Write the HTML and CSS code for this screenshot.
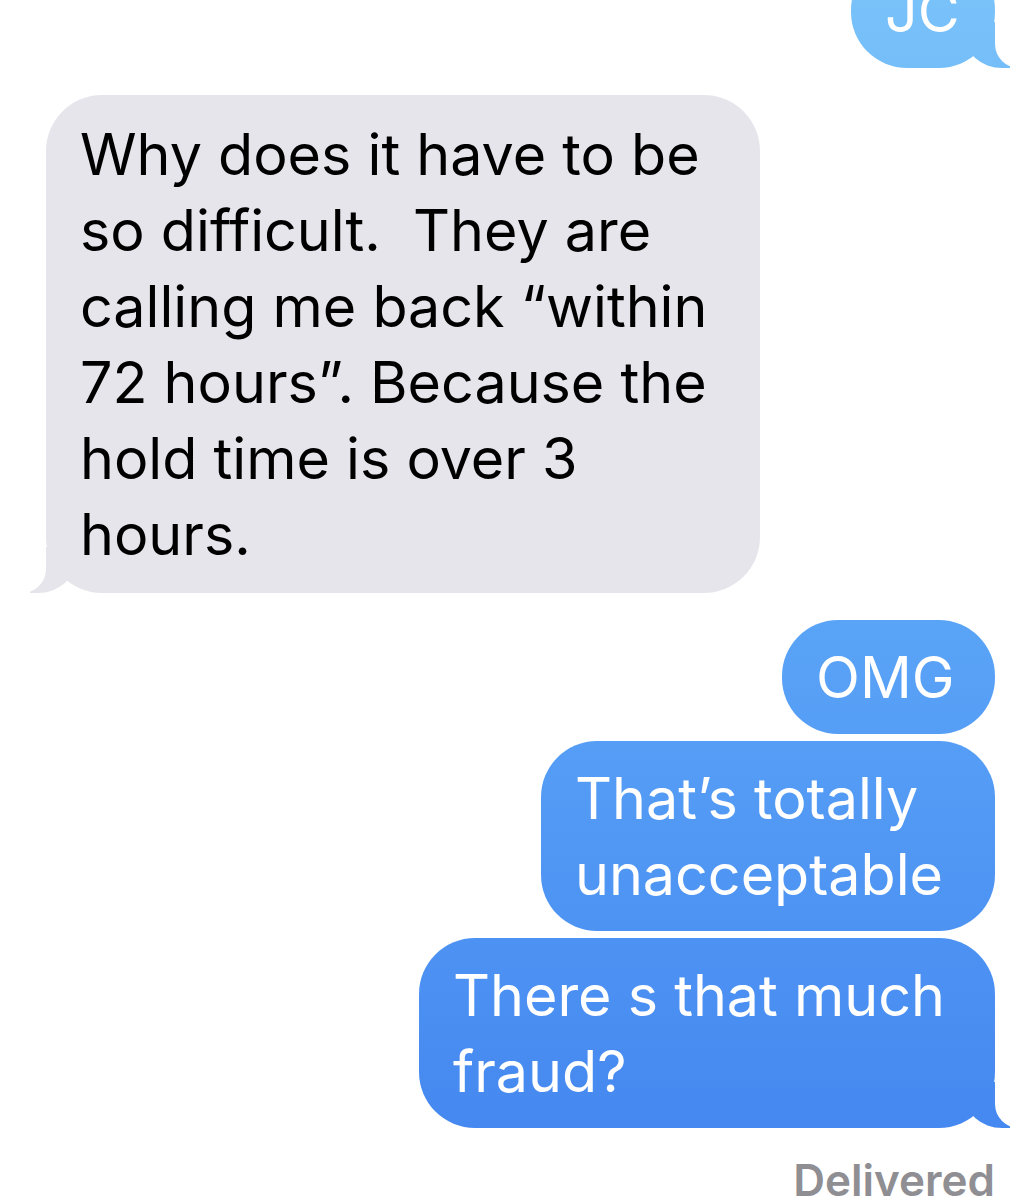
FILE: index.html
```html
<!DOCTYPE html>
<html lang="en">
<head>
<meta charset="utf-8">
<title>Messages</title>
<link rel="stylesheet" href="styles.css">
</head>
<body>
<main class="thread">
  <div class="bubble sent tail-right w-jc top-cut">JC</div>
  <div class="bubble received tail-left w-gray">Why does it have to be<br>so difficult.&nbsp; They are<br>calling me back “within<br>72 hours”. Because the<br>hold time is over 3<br>hours.</div>
  <div class="group">
    <div class="bubble sent w-omg">OMG</div>
    <div class="bubble sent w-that">That’s totally<br>unacceptable</div>
    <div class="bubble sent tail-right w-there">There s that much<br>fraud?</div>
  </div>
  <div class="status">Delivered</div>
</main>
</body>
</html>
```
FILE: styles.css
```css
html, body {
  margin: 0;
  padding: 0;
  background: #ffffff;
}
body {
  width: 1027px;
  height: 1200px;
  overflow: hidden;
  font-family: "Inter", "Liberation Sans", sans-serif;
}
.thread {
  display: flex;
  flex-direction: column;
  padding: 0 32px 0 46px;
}
.bubble {
  position: relative;
  box-sizing: border-box;
  padding: 19px 34px;
  font-size: 57.4px;
  line-height: 76px;
  white-space: nowrap;
  border-radius: 56px;
}
.sent {
  align-self: flex-end;
  color: #ffffff;
  background: linear-gradient(to bottom, #78c1f9 0px, #5aa4f7 620px, #4588f0 1130px, #4486f0 1200px);
  background-attachment: fixed;
}
.received {
  align-self: flex-start;
  color: #000000;
  background: #e6e5eb;
}
.top-cut {
  margin-top: -46px;
}
.w-jc { width: 144px; }
.w-gray { width: 714px; margin-top: 27px; padding-top: 21px; padding-bottom: 21px; }
.w-omg { width: 213px; }
.w-that { width: 454px; }
.w-there { width: 576px; }
.group {
  display: flex;
  flex-direction: column;
  align-items: flex-end;
  gap: 7px;
  margin-top: 27px;
}
.group .bubble { align-self: flex-end; }

/* tails */
.tail-right::before,
.tail-left::before {
  content: "";
  position: absolute;
  bottom: 0;
  width: 46px;
  height: 46px;
  background: inherit;
  z-index: 0;
}
.tail-right::after,
.tail-left::after {
  content: "";
  position: absolute;
  bottom: 0;
  width: 60px;
  height: 48px;
  background: #ffffff;
  z-index: 1;
}
.tail-right::before {
  right: -15px;
  border-bottom-left-radius: 38px 34px;
}
.tail-right::after {
  right: -60px;
  border-bottom-left-radius: 24px;
}
.tail-left::before {
  left: -16px;
  border-bottom-right-radius: 38px 34px;
}
.tail-left::after {
  left: -60px;
  border-bottom-right-radius: 24px;
}

.status {
  align-self: flex-end;
  margin-top: 32px;
  font-size: 44px;
  line-height: 40px;
  font-weight: 600;
  color: #8e8e93;
}
```
